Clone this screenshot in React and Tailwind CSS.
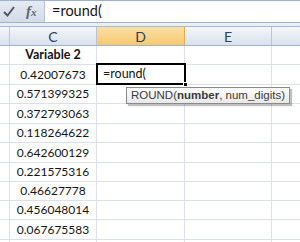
import React from 'react';

const rows = [
  { h: 'h-[19px]', c: 'Variable 2', bold: true },
  { h: 'h-[20px]', c: '0.42007673' },
  { h: 'h-[19px]', c: '0.571399325' },
  { h: 'h-[20px]', c: '0.372793063' },
  { h: 'h-[19px]', c: '0.118264622' },
  { h: 'h-[20px]', c: '0.642600129' },
  { h: 'h-[19px]', c: '0.221575316' },
  { h: 'h-[19px]', c: '0.46627778' },
  { h: 'h-[19px]', c: '0.456048014' },
  { h: 'h-[20px]', c: '0.067675583' },
  { h: 'h-[19px]', c: '' },
];

const grid = 'border-[#dae0ec]';

export default function App() {
  return (
    <div className="relative w-[300px] h-[242px] overflow-hidden bg-white font-['Lato',sans-serif] text-[#141414]">
      {/* formula bar */}
      <div className="flex h-[23px] border-t border-b border-[#9db1cd]">
        <div className="flex w-[45px] items-center gap-[11px] border-r border-[#b3c1d4] bg-gradient-to-b from-[#e6ebf2] to-[#d3dbe7] pl-[3px]">
          <svg width="12" height="11" viewBox="0 0 12 11">
            <path d="M1 6 L4.5 9.5 L11 1" fill="none" stroke="#4f5762" strokeWidth="2" />
          </svg>
          <span className="font-['Liberation_Serif',serif] text-[15px] italic font-bold leading-none text-[#5f6672]">f<span className="text-[11px]">x</span></span>
        </div>
        <div className="flex flex-1 items-center pl-[7px] text-[14.5px] leading-none">=round(</div>
      </div>
      <div className="h-[4px] border-b border-[#a9bad2] bg-[#e9eef5]" />

      {/* column headers */}
      <div className="flex h-[19px] border-b border-[#9eb3cd] text-[14px] text-[#2d3f57]">
        <div className="w-[10px] border-r border-[#b8c6d8] bg-gradient-to-b from-[#f4f7fb] to-[#d9e1ec]" />
        <div className="flex w-[87px] items-center justify-center border-r border-[#b8c6d8] bg-gradient-to-b from-[#f4f7fb] to-[#d9e1ec]">C</div>
        <div className="flex w-[88px] items-center justify-center border-r border-[#f0a94a] bg-gradient-to-b from-[#fbe0a6] to-[#f6c86c]">D</div>
        <div className="flex w-[87px] items-center justify-center border-r border-[#b8c6d8] bg-gradient-to-b from-[#f4f7fb] to-[#d9e1ec]">E</div>
        <div className="flex-1 bg-gradient-to-b from-[#f4f7fb] to-[#d9e1ec]" />
      </div>

      {/* cells */}
      {rows.map((r, i) => (
        <div key={i} className={`flex ${r.h} border-b ${grid} text-[12px]`}>
          <div className={`w-[10px] border-r ${grid}`} />
          <div className={`flex w-[87px] items-center justify-center border-r ${grid} ${r.bold ? 'font-bold text-[12.5px]' : ''}`}>{r.c}</div>
          <div className={`w-[88px] border-r ${grid}`} />
          <div className={`w-[87px] border-r ${grid}`} />
          <div className="flex-1" />
        </div>
      ))}

      {/* active cell */}
      <div className="absolute left-[96px] top-[63px] flex h-[22px] w-[90px] items-center border-2 border-black pl-[5px] text-[12.5px]">
        =round(
        <div className="absolute -bottom-[4px] -right-[4px] h-[5px] w-[5px] border border-white bg-black" />
      </div>

      {/* function tooltip */}
      <div className="absolute left-[126px] top-[87px] flex h-[17px] items-center whitespace-nowrap border border-[#8a8a8a] bg-gradient-to-b from-white to-[#e8e8e8] px-[4px] text-[11.5px] leading-none text-[#3b3b3b] shadow-[2px_2px_1px_rgba(0,0,0,0.25)] font-['Liberation_Sans',sans-serif]">
        ROUND(<span className="font-bold">number</span>, num_digits)
      </div>
    </div>
  );
}
